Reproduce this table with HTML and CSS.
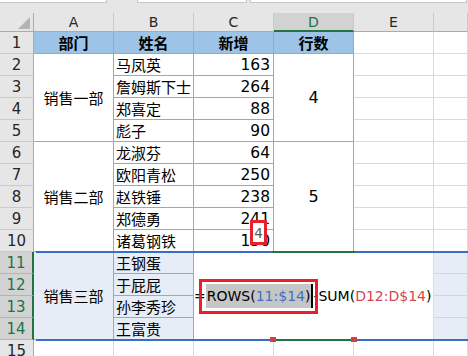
FILE: index.html
```html
<!DOCTYPE html>
<html lang="zh-CN">
<head>
<meta charset="utf-8">
<title>销售表</title>
<link rel="stylesheet" href="styles.css">
</head>
<body>
<div class="topbar">
  <div class="namebox"></div>
  <div class="fxbox"></div>
  <div class="formulabox"></div>
</div>
<div class="sheet">
  <div class="corner"><svg width="34" height="19" viewBox="0 0 34 19"><polygon points="30,4 30,16 18,16" fill="#b4b4b4"/></svg></div>
  <div class="ch">A</div><div class="ch">B</div><div class="ch">C</div><div class="ch ch-sel">D</div><div class="ch">E</div><div class="ch"></div>

  <div class="rh">1</div>
  <div class="c t hd cn">部门</div><div class="c t hd cn">姓名</div><div class="c t hd cn">新增</div><div class="c t hd cn">行数</div><div class="c"></div><div class="c"></div>

  <div class="rh">2</div>
  <div class="c t mid cn span4">销售一部</div><div class="c t name cn">马凤英</div><div class="c t num">163</div><div class="c t mid big span4">4</div><div class="c"></div><div class="c"></div>
  <div class="rh">3</div>
  <div class="c t name cn">詹姆斯下士</div><div class="c t num">264</div><div class="c"></div><div class="c"></div>
  <div class="rh">4</div>
  <div class="c t name cn">郑喜定</div><div class="c t num">88</div><div class="c"></div><div class="c"></div>
  <div class="rh">5</div>
  <div class="c t name cn">彪子</div><div class="c t num">90</div><div class="c"></div><div class="c"></div>

  <div class="rh">6</div>
  <div class="c t mid cn span5">销售二部</div><div class="c t name cn">龙淑芬</div><div class="c t num">64</div><div class="c t mid big span5">5</div><div class="c"></div><div class="c"></div>
  <div class="rh">7</div>
  <div class="c t name cn">欧阳青松</div><div class="c t num">250</div><div class="c"></div><div class="c"></div>
  <div class="rh">8</div>
  <div class="c t name cn">赵铁锤</div><div class="c t num">238</div><div class="c"></div><div class="c"></div>
  <div class="rh">9</div>
  <div class="c t name cn">郑德勇</div><div class="c t num">241</div><div class="c"></div><div class="c"></div>
  <div class="rh">10</div>
  <div class="c t name cn">诸葛钢铁</div><div class="c t num">150</div><div class="c"></div><div class="c"></div>

  <div class="rh rh-sel">11</div>
  <div class="c t tint mid cn span4">销售三部</div><div class="c t tint name cn">王钢蛋</div>
  <div class="edit">
    <span>=</span><span class="hl">ROWS(<span class="ref1">11:$14</span>)</span><span class="caret"></span><span>-SUM(<span class="ref2">D12:D$14</span>)</span>
    <div class="frame"></div>
  </div>
  <div class="c tint tg"></div>
  <div class="rh rh-sel">12</div>
  <div class="c t tint name cn">于屁屁</div><div class="c tint tg"></div>
  <div class="rh rh-sel">13</div>
  <div class="c t tint name cn">孙李秀珍</div><div class="c tint tg"></div>
  <div class="rh rh-sel">14</div>
  <div class="c t tint name cn">王富贵</div><div class="c tint tg"></div>

  <div class="rh">15</div>
  <div class="c"></div><div class="c"></div><div class="c"></div><div class="c"></div><div class="c"></div><div class="c"></div>

  <div class="selband"></div>
  <div class="active"><i class="handle h-left"></i><i class="handle h-right"></i></div>
  <div class="tip">4</div>
</div>
</body>
</html>
```
FILE: styles.css
```css
body {
  margin: 0;
  width: 468px;
  height: 356px;
  overflow: hidden;
  background: #e6e6e6;
  font-family: "DejaVu Sans", sans-serif;
}

.topbar {
  display: flex;
  height: 13px;
}
.topbar > div {
  box-sizing: border-box;
  height: 3px;
  background: #fff;
  border-bottom: 1px solid #c6c6c6;
}
.namebox {
  width: 107px;
  border-right: 1px solid #c6c6c6;
}
.fxbox {
  width: 110px;
  margin-left: 30px;
  border-left: 1px solid #c6c6c6;
  border-right: 1px solid #c6c6c6;
}
.formulabox {
  width: 217px;
  margin-left: 3px;
  border-left: 1px solid #c6c6c6;
  border-right: 1px solid #c6c6c6;
}

.sheet {
  position: relative;
  display: grid;
  grid-template-columns: 34px repeat(5, 80px) 34px;
  grid-template-rows: 19px repeat(15, 22px);
}
.sheet > div {
  box-sizing: border-box;
}

.corner {
  background: #e6e6e6;
  border-right: 1px solid #ababab;
  border-bottom: 1px solid #ababab;
}
.corner svg {
  display: block;
}

.ch {
  display: flex;
  align-items: center;
  justify-content: center;
  font-size: 14px;
  color: #262626;
  background: #e6e6e6;
  border-right: 1px solid #cacaca;
  border-bottom: 1px solid #ababab;
}
.ch-sel {
  background: #d2d2d2;
  color: #217346;
  border-bottom: 2px solid #217346;
}

.rh {
  display: flex;
  align-items: center;
  justify-content: center;
  font-size: 15px;
  color: #262626;
  background: #e6e6e6;
  border-right: 1px solid #ababab;
  border-bottom: 1px solid #cacaca;
}
.rh-sel {
  background: #d2d2d2;
  color: #217346;
  border-right: 2px solid #217346;
  border-bottom-color: #b4b4b4;
}

.c {
  display: flex;
  align-items: center;
  background: #fff;
  border-right: 1px solid #dadada;
  border-bottom: 1px solid #dadada;
  font-size: 15.5px;
  color: #000;
  white-space: nowrap;
  overflow: visible;
}
.cn {
  font-family: "Noto Sans CJK SC", sans-serif;
  font-size: 15px;
}
.t {
  border-right-color: #a6a6a6;
  border-bottom-color: #a6a6a6;
}
.hd {
  background: #9dc3e6;
  font-weight: bold;
  justify-content: center;
}
.mid {
  justify-content: center;
}
.name {
  padding-left: 2px;
}
.num {
  justify-content: flex-end;
  padding-right: 3px;
  padding-top: 1px;
}
.big {
  font-size: 16px;
}
.span4 {
  grid-row: span 4;
}
.span5 {
  grid-row: span 5;
}
.tint {
  background: #e7edf7;
}
.tg {
  border-right-color: #d0d6e0;
  border-bottom-color: #d0d6e0;
}

.edit {
  grid-column: span 3;
  grid-row: span 4;
  position: relative;
  display: flex;
  align-items: center;
  background: #fff;
  border-right: 1px solid #dadada;
  font-size: 14px;
  color: #000;
  white-space: nowrap;
}
.hl {
  display: inline-block;
  line-height: 24px;
  padding: 0 1px;
  background: #c6c6c6;
}
.caret {
  display: inline-block;
  width: 2px;
  height: 24px;
  background: #000;
}
.ref1 {
  color: #3e70c7;
}
.ref2 {
  color: #d5484e;
}
.frame {
  position: absolute;
  left: 5px;
  top: 27px;
  width: 119px;
  height: 35px;
  box-sizing: border-box;
  border: 3px solid #e8202a;
}

.selband {
  position: absolute;
  grid-column: 2 / -1;
  grid-row: 12 / 16;
  top: -1px;
  bottom: -1px;
  left: 2px;
  right: 0;
  border-top: 2px solid #3a6ec6;
  border-bottom: 2px solid #3a6ec6;
}
.active {
  position: absolute;
  grid-column: 5 / 6;
  grid-row: 12 / 16;
  top: -1px;
  bottom: -1px;
  left: -2px;
  right: -1px;
  border-top: 2px solid #217346;
  border-bottom: 2px solid #217346;
}
.handle {
  position: absolute;
  bottom: -3px;
  width: 6px;
  height: 5px;
  background: #d04046;
}
.h-left {
  left: -2px;
}
.h-right {
  right: -2px;
}

.tip {
  position: absolute;
  grid-column: 4 / 5;
  grid-row: 10 / 12;
  left: 56px;
  top: 12px;
  width: 17px;
  height: 25px;
  box-sizing: border-box;
  border: 3px solid #e8202a;
  background: #fff;
  color: #595959;
  font-size: 13.5px;
  display: flex;
  align-items: center;
  justify-content: center;
  padding-top: 1px;
}
```
